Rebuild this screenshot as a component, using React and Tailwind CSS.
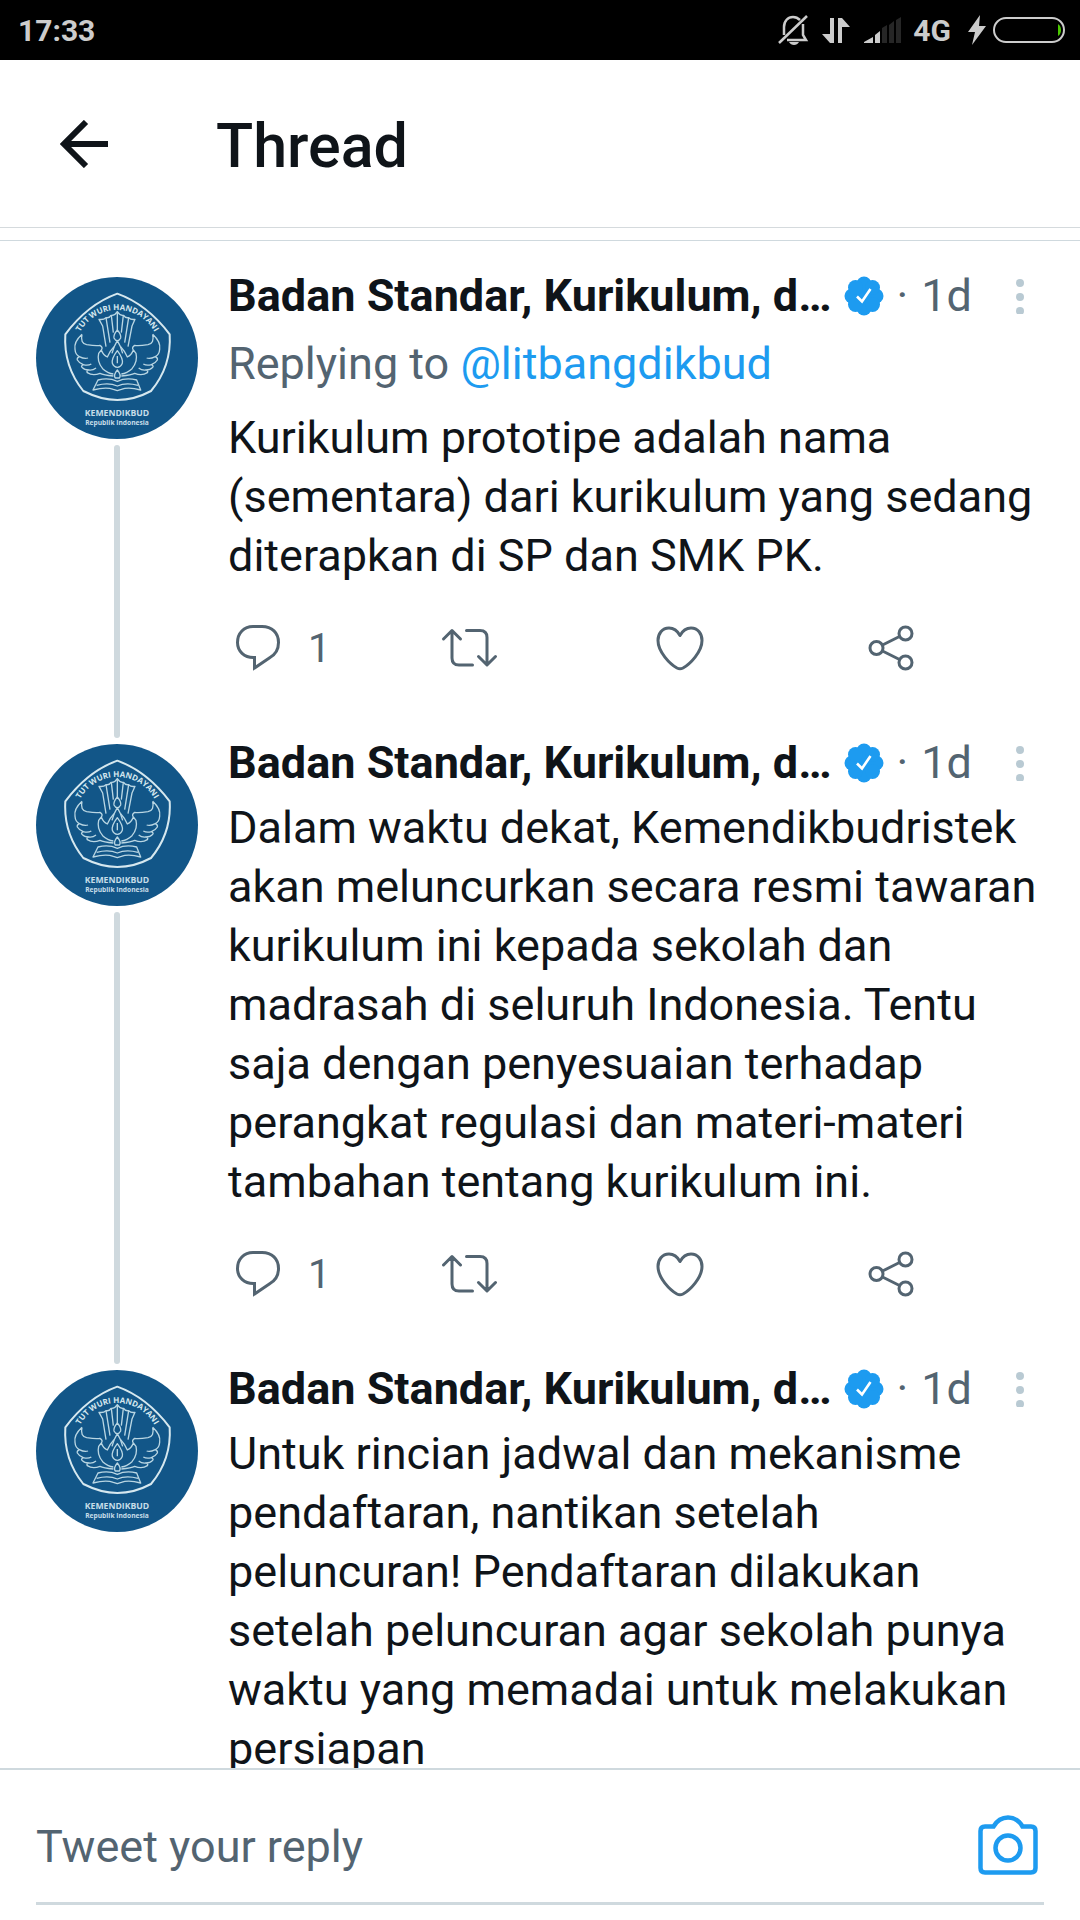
const AUTHOR = 'Badan Standar, Kurikulum, d…'

const tweets = [
  {
    id: 1,
    replyingTo: '@litbangdikbud',
    text: 'Kurikulum prototipe adalah nama (sementara) dari kurikulum yang sedang diterapkan di SP dan SMK PK.',
    replies: 1,
  },
  {
    id: 2,
    text: 'Dalam waktu dekat, Kemendikbudristek akan meluncurkan secara resmi tawaran kurikulum ini kepada sekolah dan madrasah di seluruh Indonesia. Tentu saja dengan penyesuaian terhadap perangkat regulasi dan materi-materi tambahan tentang kurikulum ini.',
    replies: 1,
  },
  {
    id: 3,
    text: 'Untuk rincian jadwal dan mekanisme pendaftaran, nantikan setelah peluncuran! Pendaftaran dilakukan setelah peluncuran agar sekolah punya waktu yang memadai untuk melakukan persiapan',
    last: true,
  },
]

function StatusBar() {
  return (
    <div className="flex h-[60px] shrink-0 items-center justify-between bg-black pl-[18px] pr-[15px] text-[30px] font-bold text-[#cccccc]">
      <span>17:33</span>
      <div className="flex items-center">
        <svg className="h-8 w-8" viewBox="0 0 32 32" fill="none" stroke="currentColor" strokeWidth="2.5">
          <path d="M7 21V13C7 7 11 3 16 3c3 0 5 1 7 3M26 10v11l3 5H10" />
          <path d="M2 29 30 2" />
          <path d="M12 28h10c-1 2-3 3-5 3s-4-1-5-3z" fill="currentColor" stroke="none" />
        </svg>
        <svg className="ml-[13px] h-8 w-7" viewBox="0 0 28 32" fill="currentColor">
          <path d="M8 4h4v25H8l-8-9h8zM16 4h4l8 9h-8v16h-4z" />
        </svg>
        <svg className="ml-[14px] h-8 w-[38px]" viewBox="0 0 38 32" fill="currentColor">
          <path d="M0 29v-1l9-5v6zM11 29v-8l5-4v12z" />
          <path d="M18 29V14l5-3v18zM25 29V11l5-4v22zM32 29V6l5-3v26z" fill="#262626" />
        </svg>
        <span className="ml-[11px]">4G</span>
        <svg className="ml-[17px] h-8 w-[18px]" viewBox="0 0 18 32" fill="currentColor">
          <path d="M12 1 0 18h7L4 31 18 12h-7z" />
        </svg>
        <svg className="ml-[7px] h-8 w-[72px]" viewBox="0 0 72 32">
          <rect x="1" y="4" width="70" height="24" rx="12" fill="none" stroke="currentColor" strokeWidth="2" />
          <path d="M65 10q3 2 3 6t-3 6z" fill="#4bc800" />
        </svg>
      </div>
    </div>
  )
}

function Avatar() {
  return (
    <svg className="size-[162px] shrink-0" viewBox="30 33 486 486" fill="none" stroke="#b9d6e3" strokeWidth="4" strokeLinejoin="round">
      <circle cx="273" cy="276" r="243" fill="#125688" stroke="none" />
      <path d="M274 83Q185 115 118 205Q112 300 172 375Q225 402 274 402Q325 402 375 375Q437 300 431 205Q363 115 274 83Z" stroke="#d6e8ef" strokeWidth="6" />
      <path id="motto" d="M162 199A127 127 0 0 1 386 199" stroke="none" />
      <text fill="#d6e8ef" stroke="none" fontFamily="Open Sans, sans-serif" fontSize="24" fontWeight="700" textAnchor="middle">
        <textPath href="#motto" startOffset="50%">TUT WURI HANDAYANI</textPath>
      </text>
      {/* tail feathers */}
      <path d="M240 242 230 180 219 160Q233 162 240 155Q250 157 255 148Q266 150 274 137Q282 150 293 148Q298 157 308 155Q315 162 327 160L318 180 306 242" />
      <path d="M240 155 252 230M256 148 262 200M274 137V192M292 148 286 200M308 155 296 230" />
      {/* flame */}
      <path d="M274 192Q262 206 264 216Q268 224 274 224Q280 224 284 216Q286 206 274 192ZM274 224Q264 240 258 262M274 224Q284 240 290 262M274 254Q256 278 259 292Q264 304 274 304Q284 304 289 292Q292 278 274 254ZM274 270V292M274 312Q261 328 268 336H280Q287 328 274 312Z" />
      {/* wings */}
      <path d="M168 205Q143 228 147 250Q148 266 160 272Q152 276 154 282Q160 292 172 296Q164 300 168 304Q175 312 188 312Q180 316 184 320Q200 331 222 322Q232 327 262 330M168 205Q162 232 182 236Q210 240 222 238Q232 244 226 252L218 262Q212 286 230 308Q245 322 262 324M226 252Q232 268 244 273Q252 254 264 242M160 272Q176 280 186 276M172 296Q186 300 196 294M188 312Q200 314 210 306" />
      <path d="M380 205Q405 228 401 250Q400 266 388 272Q396 276 394 282Q388 292 376 296Q384 300 380 304Q373 312 360 312Q368 316 364 320Q348 331 326 322Q316 327 286 330M380 205Q386 232 366 236Q338 240 326 238Q316 244 322 252L330 262Q336 286 318 308Q303 322 286 324M322 252Q316 268 304 273Q296 254 284 242M388 272Q372 280 362 276M376 296Q362 300 352 294M360 312Q348 314 338 306" />
      {/* book */}
      <path d="M216 342 201 372Q240 362 262 370L274 374 286 370Q308 362 344 372L332 342Q300 334 274 346Q248 334 216 342ZM212 358Q248 348 274 360Q300 348 336 358" />
      <g fill="#c6dde8" stroke="none" textAnchor="middle" fontFamily="Open Sans, sans-serif">
        <text x="273" y="450" fontSize="26" fontWeight="700">KEMENDIKBUD</text>
        <text x="273" y="477" fontSize="20" fontWeight="700">Republik Indonesia</text>
      </g>
    </svg>
  )
}

function VerifiedBadge() {
  return (
    <svg className="size-10" viewBox="0 0 40 40">
      <g fill="#1d9bf0">
        <circle cx="20" cy="20" r="15" />
        <circle cx="20" cy="8" r="7.5" />
        <circle cx="20" cy="32" r="7.5" />
        <circle cx="8" cy="20" r="7.5" />
        <circle cx="32" cy="20" r="7.5" />
        <circle cx="11.5" cy="11.5" r="7.5" />
        <circle cx="28.5" cy="11.5" r="7.5" />
        <circle cx="11.5" cy="28.5" r="7.5" />
        <circle cx="28.5" cy="28.5" r="7.5" />
      </g>
      <path d="M13 20.500 18 25.500 26.500 13" fill="none" stroke="#fff" strokeWidth="2.600" />
    </svg>
  )
}

function ActionIcon({ children }) {
  return (
    <svg className="size-[60px] shrink-0" viewBox="0 0 60 60" fill="none" stroke="currentColor" strokeWidth="3" strokeLinecap="round" strokeLinejoin="round">
      {children}
    </svg>
  )
}

function Actions({ replies }) {
  return (
    <div className="-mr-7 mt-8 grid grid-cols-4 text-[#536471]">
      <button className="flex h-[60px] items-center gap-5 text-[40px]" aria-label="Reply">
        <ActionIcon>
          <path d="M26.500 40.500C16 41 9.500 34 9.500 25.500C9.500 16 16 9.500 25 9.500H34C44 9.500 50.500 16 50.500 25.500C50.500 32 48 37 42 40.500L26.500 51Z" strokeLinejoin="miter" />
        </ActionIcon>
        <span className="pt-1">{replies}</span>
      </button>
      <button className="flex items-center" aria-label="Retweet">
        <ActionIcon>
          <path d="M4.500 22 13 13.500 21.500 22M13 15V41Q13 48 20 48H33.500M27.500 13.500H41Q48 13.500 48 20.500V47M39.500 39.500 48 48 56.500 39.500" />
        </ActionIcon>
      </button>
      <button className="flex items-center" aria-label="Like">
        <ActionIcon>
          <path d="M30 18.500C27 13 23 11 19 11C12 11 8 17 8 23.500C8 35 20 47 27 51Q30 52.500 33 51C40 47 52 35 52 23.500C52 17 48 11 41 11C37 11 33 13 30 18.500Z" />
        </ActionIcon>
      </button>
      <button className="flex items-center" aria-label="Share">
        <ActionIcon>
          <circle cx="15.500" cy="31" r="6.500" />
          <circle cx="44.500" cy="16.500" r="6.500" />
          <circle cx="44.500" cy="45.500" r="6.500" />
          <path d="M21.500 28 38.500 19.500M21.500 34 38.500 42.500" />
        </ActionIcon>
      </button>
    </div>
  )
}

function Tweet({ tweet }) {
  return (
    <article className="flex gap-[30px] px-9">
      <div className="flex shrink-0 flex-col items-center gap-1.5 pt-1.5">
        <Avatar />
        {!tweet.last && <div className="w-1.5 flex-1 rounded-full bg-[#cfd9de]" />}
      </div>
      <div className="min-w-0 flex-1 pb-[61px]">
        <div className="flex h-12 items-center pt-0.5 text-[45px] text-[#536471]">
          <h2 className="truncate font-bold leading-[60px] text-[#0f1419]">{AUTHOR}</h2>
          <span className="ml-3 shrink-0">
            <VerifiedBadge />
          </span>
          <span className="ml-[13px] shrink-0">·</span>
          <span className="ml-[13px] shrink-0">1d</span>
          <button className="ml-auto shrink-0 pr-5" aria-label="More">
            <svg className="h-9 w-2" viewBox="0 0 8 36" fill="#b9cad3">
              <circle cx="4" cy="5" r="4" />
              <circle cx="4" cy="19" r="4" />
              <circle cx="4" cy="33" r="4" />
            </svg>
          </button>
        </div>
        {tweet.replyingTo && (
          <p className="my-[15px] text-[45px] leading-[59px] text-[#536471]">
            Replying to <a href="#litbangdikbud" className="text-[#1d9bf0]">{tweet.replyingTo}</a>
          </p>
        )}
        <p className="mt-3 text-[45px] leading-[59px] text-[#0f1419]">{tweet.text}</p>
        {!tweet.last && <Actions replies={tweet.replies} />}
      </div>
    </article>
  )
}

export default function App() {
  return (
    <div className="flex h-screen flex-col overflow-hidden bg-white font-['Roboto',sans-serif]">
      <StatusBar />
      <header className="flex h-[168px] shrink-0 items-center border-b border-[#d5dadd] pl-[60px] text-[#0f1419]">
        <button aria-label="Back">
          <svg className="size-12" viewBox="0 0 48 48" fill="none" stroke="currentColor" strokeWidth="6">
            <path d="M26 2 4 24 26 46M4 24H48" />
          </svg>
        </button>
        <h1 className="ml-[108px] pt-1.5 text-[61px] font-medium">Thread</h1>
      </header>
      <main className="mt-3 min-h-0 flex-1 overflow-hidden border-t border-[#cfd9de] pt-[30px]">
        {tweets.map((tweet) => (
          <Tweet key={tweet.id} tweet={tweet} />
        ))}
      </main>
      <footer className="shrink-0 border-t-2 border-[#cfd9de] px-9 pb-[15px]">
        <div className="flex h-[135px] items-center justify-between border-b-3 border-[#cfd9de]">
          <input
            type="text"
            aria-label="Tweet your reply"
            placeholder="Tweet your reply"
            className="h-full min-w-0 flex-1 pt-5 text-[45px] text-[#0f1419] outline-none placeholder:text-[#536471]"
          />
          <button className="pr-1.5 pt-[18px]" aria-label="Add photo">
            <svg className="size-[60px]" viewBox="0 0 60 60" fill="none" stroke="#1d9bf0" strokeWidth="4.500">
              <path d="M7 11.500H15.500C19 5.500 24 2.500 30 2.500S41 5.500 44.500 11.500H53Q57.500 11.500 57.500 16V53Q57.500 57.500 53 57.500H7Q2.500 57.500 2.500 53V16Q2.500 11.500 7 11.500Z" />
              <circle cx="30" cy="33" r="12.500" />
            </svg>
          </button>
        </div>
      </footer>
    </div>
  )
}
